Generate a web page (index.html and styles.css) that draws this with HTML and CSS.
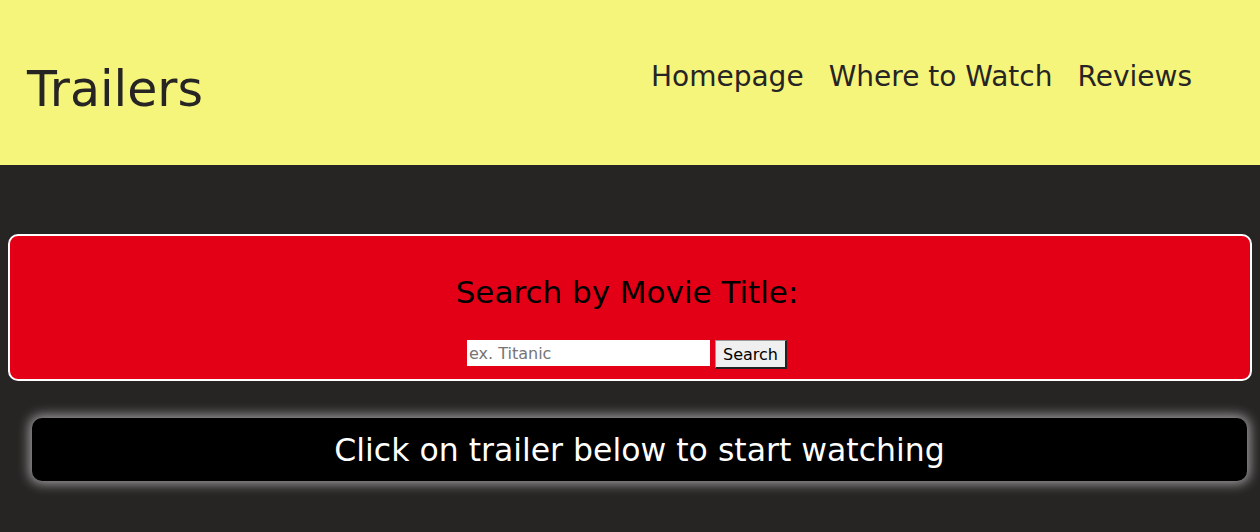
FILE: index.html
```html
<!DOCTYPE html>
<html>
<head>
<meta charset="utf-8">
<link rel="stylesheet" href="styles.css">
</head>
<body>
<header class="site-header">
  <h1 class="logo">Trailers</h1>
  <nav class="nav">
    <a href="#">Homepage</a>
    <a href="#">Where to Watch</a>
    <a href="#">Reviews</a>
  </nav>
</header>
<main class="main">
  <section class="search-box">
    <h2 class="search-title">Search by Movie Title:</h2>
    <form class="search-form">
      <input class="search-input" type="text" placeholder="ex. Titanic">
      <button class="search-btn" type="button">Search</button>
    </form>
  </section>
  <div class="banner">Click on trailer below to start watching</div>
</main>
</body>
</html>
```

FILE: styles.css
```css
* { box-sizing: border-box; }
html, body { margin: 0; padding: 0; }
body {
  background: #272424;
  font-family: "DejaVu Sans", sans-serif;
  height: 532px;
  overflow: hidden;
}
.site-header {
  background: #f6f57b;
  height: 165px;
  display: flex;
  justify-content: space-between;
  align-items: flex-start;
  padding: 0 68px 0 27px;
}
.logo {
  margin: 58px 0 0;
  font-size: 49px;
  font-weight: 400;
  color: #272424;
  line-height: 64px;
}
.nav {
  display: flex;
  gap: 25px;
  margin-top: 57px;
}
.nav a {
  color: #272424;
  text-decoration: none;
  font-size: 28px;
  line-height: 40px;
}
.main {
  padding: 69px 8px 0;
}
.search-box {
  background: #e30016;
  border: 2px solid #ffffff;
  border-radius: 10px;
  height: 147px;
  display: flex;
  flex-direction: column;
  align-items: center;
  padding: 36px 6px 0 0;
}
.search-title {
  margin: 0;
  font-size: 31px;
  font-weight: 400;
  color: #000;
  line-height: 40px;
}
.search-form {
  display: flex;
  align-items: flex-start;
  gap: 5px;
  margin-top: 28px;
}
.search-input {
  width: 243px;
  height: 26px;
  border: none;
  padding: 0 2px;
  font-family: "DejaVu Sans", sans-serif;
  font-size: 16px;
  background: #fff;
}
.search-input::placeholder { color: #757575; }
.search-btn {
  width: 72px;
  height: 29px;
  background: #efefef;
  border-style: solid;
  border-color: #999 #222 #222 #999;
  border-width: 1px 2px 2px 1px;
  font-family: "DejaVu Sans", sans-serif;
  font-size: 16px;
  color: #000;
  padding: 0;
}
.banner {
  margin: 37px 5px 0 24px;
  height: 63px;
  background: #000;
  border-radius: 10px;
  box-shadow: 0 0 12px 3px rgba(255,255,255,0.55);
  color: #fff;
  font-size: 31.5px;
  display: flex;
  align-items: center;
  justify-content: center;
}
```
